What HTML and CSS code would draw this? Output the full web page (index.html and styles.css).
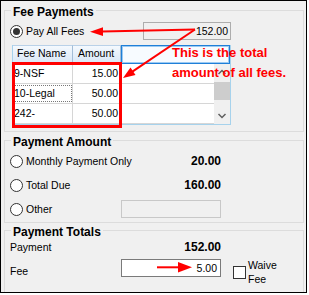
FILE: index.html
```html
<!DOCTYPE html>
<html lang="en">
<head>
    <meta charset="UTF-8">
    <title>Fee Payments</title>
    <link rel="stylesheet" href="styles.css">
</head>
<body>
    <div class="page">
        <div class="frame">
            <div class="group">
                <div class="group-title">Fee Payments</div>
                <div class="fees-body">
                    <div class="pay-all">
                        <div class="option"><span class="radio checked"></span>Pay All Fees</div>
                        <div class="textbox readonly">152.00</div>
                    </div>
                    <div class="grid">
                        <div class="grid-head">
                            <div class="cell col-name">Fee Name</div>
                            <div class="cell col-amount">Amount</div>
                            <div class="cell col-rest current"></div>
                        </div>
                        <div class="grid-main">
                            <div class="rows">
                                <div class="row">
                                    <div class="cell col-name">9-NSF</div>
                                    <div class="cell col-amount">15.00</div>
                                    <div class="cell col-rest"></div>
                                </div>
                                <div class="row">
                                    <div class="cell col-name focused">10-Legal</div>
                                    <div class="cell col-amount">50.00</div>
                                    <div class="cell col-rest"></div>
                                </div>
                                <div class="row">
                                    <div class="cell col-name">242-</div>
                                    <div class="cell col-amount">50.00</div>
                                    <div class="cell col-rest"></div>
                                </div>
                            </div>
                            <div class="scrollbar">
                                <svg width="16" height="17" viewBox="0 0 16 17"><polyline points="4.5,10 8,6.5 11.5,10" fill="none" stroke="#606060" stroke-width="1.5"/></svg>
                                <div class="thumb"></div>
                                <svg class="scroll-down" width="16" height="17" viewBox="0 0 16 17"><polyline points="4.5,7 8,10.5 11.5,7" fill="none" stroke="#606060" stroke-width="1.5"/></svg>
                            </div>
                        </div>
                    </div>
                </div>
            </div>

            <div class="group">
                <div class="group-title">Payment Amount</div>
                <div class="form-rows amount-rows">
                    <div class="option"><span class="radio"></span>Monthly Payment Only</div>
                    <div class="value">20.00</div>
                    <div></div>
                    <div class="option"><span class="radio"></span>Total Due</div>
                    <div class="value">160.00</div>
                    <div></div>
                    <div class="option"><span class="radio"></span>Other</div>
                    <div class="textbox disabled"></div>
                    <div></div>
                </div>
            </div>

            <div class="group last">
                <div class="group-title">Payment Totals</div>
                <div class="form-rows totals-rows">
                    <div class="label">Payment</div>
                    <div class="value">152.00</div>
                    <div></div>
                    <div class="label fee-label">Fee</div>
                    <div class="textbox edit">5.00</div>
                    <div class="waive"><span class="check"></span><span class="waive-text">Waive<br>Fee</span></div>
                </div>
            </div>
        </div>

        <svg class="marks" width="309" height="295" viewBox="0 0 309 295">
            <rect x="13.5" y="63.5" width="107" height="63" fill="none" stroke="#ff0000" stroke-width="3"/>
            <line x1="195" y1="29.5" x2="102" y2="31.5" stroke="#ff0000" stroke-width="2"/>
            <polygon points="90,31.7 103,27.3 103,36" fill="#ff0000"/>
            <line x1="195" y1="29.5" x2="132" y2="71.8" stroke="#ff0000" stroke-width="2"/>
            <polygon points="123,78 130.5,67.6 135.5,75" fill="#ff0000"/>
            <line x1="157" y1="267.3" x2="180" y2="267.3" stroke="#ff0000" stroke-width="2"/>
            <polygon points="192,267.3 178,262 178,272.5" fill="#ff0000"/>
        </svg>
        <div class="note">This is the total<br>amount of all fees.</div>
    </div>
</body>
</html>
```

FILE: styles.css
```css
* {
    margin: 0;
    padding: 0;
    box-sizing: border-box;
}

body {
    background: #ffffff;
    font-family: 'Liberation Sans', Arial, sans-serif;
    font-size: 10.5px;
    color: #000000;
}

.page {
    position: relative;
    width: 309px;
    height: 295px;
}

.frame {
    width: 307px;
    height: 293px;
    border: 1px solid #000000;
    background: #f0f0f0;
    padding: 9px 2px 0 3px;
    overflow: hidden;
}

.group {
    border: 1px solid #dcdcdc;
    padding: 0 5px;
}

.group + .group {
    margin-top: 8px;
}

.group.last {
    margin-top: 7px;
    padding-bottom: 20px;
}

.group-title {
    width: max-content;
    margin: -6px 0 0 1px;
    padding: 0 2px;
    background: #f0f0f0;
    font-size: 12px;
    font-weight: bold;
    line-height: 14px;
}

/* fee payments */
.fees-body {
    width: 221px;
    padding-bottom: 6px;
}

.pay-all {
    display: flex;
    align-items: center;
    justify-content: space-between;
    height: 20px;
    margin-top: 2px;
}

.option {
    display: flex;
    align-items: center;
    gap: 3px;
    white-space: nowrap;
}

.radio {
    flex: none;
    width: 13px;
    height: 13px;
    border: 1px solid #333333;
    border-radius: 50%;
    background: #ffffff;
    display: flex;
    align-items: center;
    justify-content: center;
}

.radio.checked::after {
    content: "";
    width: 7px;
    height: 7px;
    border-radius: 50%;
    background: #333333;
}

.textbox {
    height: 18px;
    border: 1px solid #adadad;
    background: #f0f0f0;
    text-align: right;
    padding-right: 2px;
    line-height: 16px;
}

.textbox.readonly {
    width: 88px;
}

.textbox.disabled {
    border-color: #c8c8c8;
}

.textbox.edit {
    margin-top: 1px;
    background: #ffffff;
    border-color: #7a7a7a;
    padding-right: 3px;
}

.grid {
    width: 219px;
    margin: 4px 0 0 2px;
    border: 1px solid #a6d2ec;
    border-top: 0;
}

.grid-head {
    display: flex;
    height: 19px;
}

.grid-head .cell {
    background: linear-gradient(#f4f9fe, #d9e7f6);
    border-top: 1px solid #b9d1e8;
    border-right: 1px solid #a3bdd6;
    border-bottom: 1px solid #a3bdd6;
    line-height: 15px;
    padding-left: 4px;
}

.grid-head .col-amount {
    padding-left: 5px;
}

.grid-head .current {
    background: #f7fbff;
    border: 1px solid #1f7fd8;
    box-shadow: inset 0 0 0 1px #9ccaf2;
}

.col-name {
    width: 60px;
    flex: none;
}

.col-amount {
    width: 48px;
    flex: none;
}

.col-rest {
    flex: 1;
}

.grid-main {
    display: flex;
}

.rows {
    flex: 1;
    background: #ffffff;
}

.row {
    display: flex;
    height: 20px;
    border-bottom: 1px solid #d6d6d6;
    line-height: 19px;
}

.row .col-name {
    border-right: 1px solid #d6d6d6;
    padding-left: 1px;
}

.row .col-amount {
    border-right: 1px solid #d6d6d6;
    text-align: right;
    padding-right: 2px;
}

.row .focused {
    outline: 1px dotted #777777;
    outline-offset: -2px;
}

.scrollbar {
    width: 16px;
    flex: none;
    display: flex;
    flex-direction: column;
    background: #f0f0f0;
}

.thumb {
    height: 18px;
    margin-top: 1px;
    background: #cdcdcd;
}

.scroll-down {
    margin-top: auto;
}

/* payment amount / totals */
.form-rows {
    display: grid;
    grid-template-columns: 111px 100px 1fr;
    align-items: center;
    margin-top: 2px;
}

.amount-rows {
    grid-auto-rows: 20px;
    row-gap: 4px;
    padding-bottom: 3px;
}

.value {
    text-align: right;
    font-size: 12px;
    font-weight: bold;
}

.totals-rows {
    grid-template-rows: 16px auto;
    row-gap: 3px;
    margin-top: 0;
    line-height: 16px;
}

.totals-rows .fee-label {
    align-self: start;
    padding-top: 3px;
    line-height: 20px;
}

.totals-rows .textbox {
    align-self: start;
}

.waive {
    align-self: start;
    display: flex;
    align-items: flex-start;
    gap: 2px;
    margin-left: 12px;
}

.check {
    flex: none;
    width: 13px;
    height: 13px;
    margin-top: 8px;
    border: 1px solid #333333;
    background: #ffffff;
}

.waive-text {
    line-height: 14px;
}

/* annotations drawn over the screenshot */
.marks {
    position: absolute;
    left: 0;
    top: 0;
    pointer-events: none;
}

.note {
    position: absolute;
    left: 172px;
    top: 43px;
    color: #ff0000;
    font-size: 13px;
    font-weight: bold;
    line-height: 20px;
    white-space: nowrap;
}
```
